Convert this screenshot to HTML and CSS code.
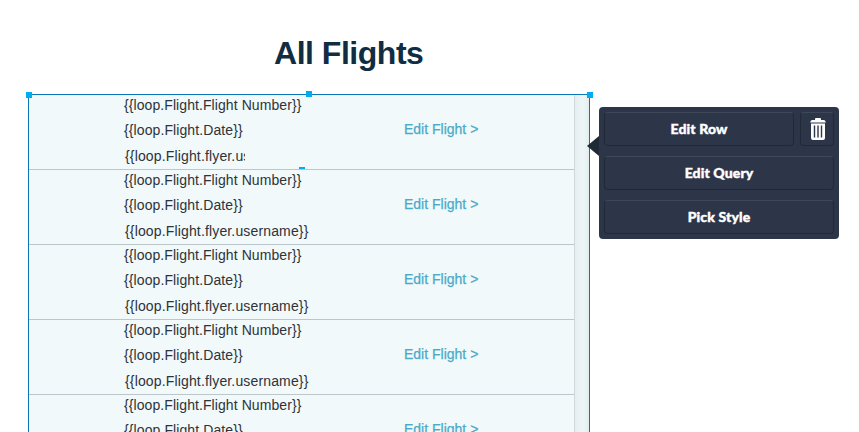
FILE: index.html
```
<!DOCTYPE html>
<html lang="en">
<head>
<meta charset="utf-8">
<title>All Flights</title>
<link rel="stylesheet" href="styles.css">
</head>
<body>
<h1 class="title"><span>All Flights</span></h1>
<main class="editor">
  <section class="list">
    <div class="rows">
      <article class="row selected">
        <div class="fields"><p class="number">{{loop.Flight.Flight Number}}</p><p class="date">{{loop.Flight.Date}}</p><p class="user">{{loop.Flight.flyer.username}}</p></div>
        <a class="edit">Edit Flight &gt;</a>
        <i class="handle row-handle"></i>
      </article>
      <article class="row">
        <div class="fields"><p class="number">{{loop.Flight.Flight Number}}</p><p class="date">{{loop.Flight.Date}}</p><p class="user">{{loop.Flight.flyer.username}}</p></div>
        <a class="edit">Edit Flight &gt;</a>
      </article>
      <article class="row">
        <div class="fields"><p class="number">{{loop.Flight.Flight Number}}</p><p class="date">{{loop.Flight.Date}}</p><p class="user">{{loop.Flight.flyer.username}}</p></div>
        <a class="edit">Edit Flight &gt;</a>
      </article>
      <article class="row">
        <div class="fields"><p class="number">{{loop.Flight.Flight Number}}</p><p class="date">{{loop.Flight.Date}}</p><p class="user">{{loop.Flight.flyer.username}}</p></div>
        <a class="edit">Edit Flight &gt;</a>
      </article>
      <article class="row">
        <div class="fields"><p class="number">{{loop.Flight.Flight Number}}</p><p class="date">{{loop.Flight.Date}}</p></div>
        <a class="edit">Edit Flight &gt;</a>
      </article>
    </div>
    <div class="gutter"></div>
    <i class="handle left"></i><i class="handle middle"></i><i class="handle right"></i>
  </section>
  <aside class="menu">
    <svg class="arrow" width="12" height="20" viewBox="0 0 12 20"><path d="M12 0V20L0 10Z" fill="#202936"/></svg>
    <div class="split">
      <button class="btn"><span>Edit Row</span></button>
      <button class="btn trash" aria-label="Delete">
        <svg width="16" height="22" viewBox="0 0 16 22" fill="#fff"><path d="M5 2V1Q5 0 6 0H10Q11 0 11 1V2H14Q15.5 2 15.8 4.5H.2Q.5 2 2 2ZM1 5.5H15V20Q15 22 13 22H3Q1 22 1 20Z"/><path d="M4.5 7.5V19.5M8 7.5V19.5M11.5 7.5V19.5" stroke="#2d3648" stroke-width="1.4"/></svg>
      </button>
    </div>
    <button class="btn"><span>Edit Query</span></button>
    <button class="btn"><span>Pick Style</span></button>
  </aside>
</main>
</body>
</html>
```
FILE: styles.css
```
* { box-sizing: border-box; }
body { margin: 0; height: 432px; overflow: hidden; background: #fff; font-family: "Liberation Sans", Arial, sans-serif; }
.title { margin: 0; height: 94px; padding: 34px 0 0 274px; font-size: 32px; line-height: 38px; font-weight: 700; letter-spacing: -.48px; color: #102d42; white-space: nowrap; }
.editor { display: flex; align-items: flex-start; padding-left: 28px; height: 338px; }
.list { position: relative; display: flex; width: 562px; height: 338px; border: 1px solid #0c76b8; border-bottom: 0; }
.rows { width: 545px; background: #f1f9fb; }
.row { position: relative; display: flex; height: 75px; padding-left: 95px; border-bottom: 1px solid #bdc7cb; }
.row:last-child { height: 37px; border-bottom: 0; }
.fields { width: 280px; font-size: 14px; color: #2e3338; white-space: nowrap; }
.fields p { margin: 0; height: 25px; line-height: 20px; }
.number { letter-spacing: .08px; }
.date { letter-spacing: .1px; }
.fields .user { padding: 1px 0 0 1px; letter-spacing: .15px; }
.selected .user { width: 121px; overflow: hidden; }
.edit { margin-top: 24px; font-size: 14px; line-height: 20px; color: #4baac9; -webkit-text-stroke: .25px #4baac9; white-space: nowrap; }
.gutter { flex: 1; border-left: 1px solid #cfd9dc; background: linear-gradient(90deg, #e5eef0, #edf5f6 50%, #ebf4f5 75%, #e3eced); }
.handle { position: absolute; width: 6px; height: 6px; background: #00adf2; }
.left { left: -3px; top: -3px; }
.middle { left: 277px; top: -4px; }
.right { right: -4px; top: -3px; }
.row-handle { left: 270px; bottom: 0; height: 2px; }
.menu { position: relative; display: flex; flex-direction: column; gap: 10px; width: 240px; height: 132px; margin: 13px 0 0 9px; padding: 5px; background: #2d3648; border-radius: 4px; }
.arrow { position: absolute; left: -12px; top: 29px; }
.split { display: flex; gap: 6px; }
.btn { display: flex; align-items: center; justify-content: center; flex: 1; height: 34px; flex-basis: 34px; padding: 0; border: 1px solid #202938; border-top-color: #3e4859; border-radius: 4px; background: #2d3648; color: #fff; font: 900 14px/20px Lato, sans-serif; letter-spacing: .12px; -webkit-text-stroke: .4px #fff; white-space: nowrap; }
.trash { flex: 0 0 34px; }
.trash svg { margin-left: 1px; }
```
